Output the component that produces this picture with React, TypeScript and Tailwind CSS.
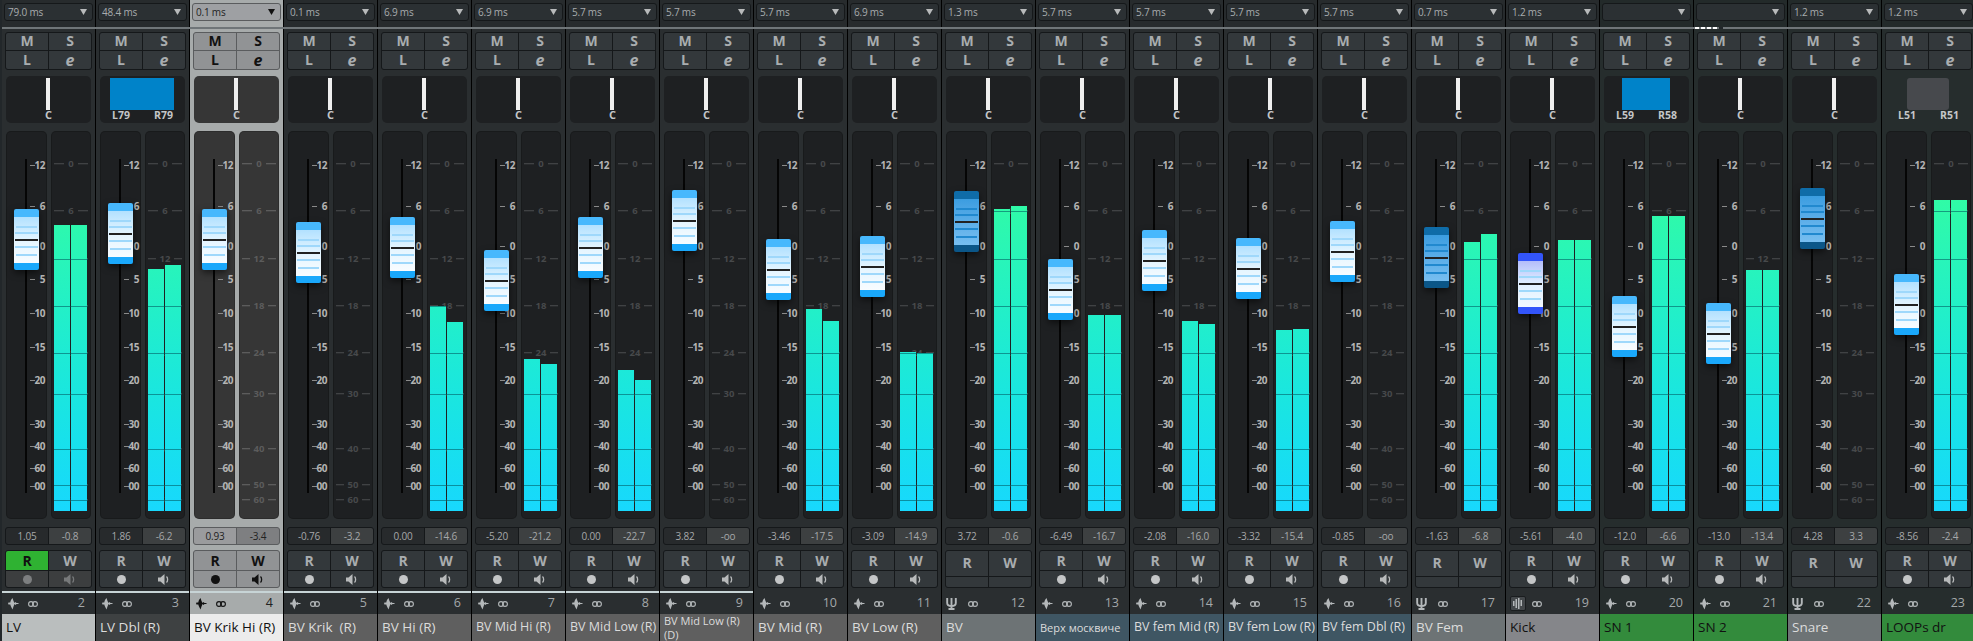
import React from "react";

type Ch = {
  name: string;
  num: number;
  ms: string;
  vol: string;
  peak: string;
  fader: number;
  meter?: [number, number];
  kind?: "dark" | "blue";
  pan?: { x: number; w: number; l: string; r: string };
  nameBg: string;
  nameText: string;
  icon?: "wave" | "group" | "kick";
  noRec?: boolean;
};

const GREY = "bg-[#5f5f5f]";
const SLATE = "bg-[#3f5663]";
const GREEN = "bg-[#338b3c]";
const LT = "text-[#dcdcdc]";
const DK = "text-[#111111]";

const channels: Ch[] = [
  { name: "LV", num: 2, ms: "79.0 ms", vol: "1.05", peak: "-0.8", fader: 209, meter: [225, 225], nameBg: "bg-[#babebe]", nameText: DK },
  { name: "LV Dbl (R)", num: 3, ms: "48.4 ms", vol: "1.86", peak: "-6.2", fader: 203, meter: [269, 265], nameBg: "bg-[#3e4142]", nameText: LT, pan: { x: 10, w: 64, l: "L79", r: "R79" } },
  { name: "BV Krik Hi (R)", num: 4, ms: "0.1 ms", vol: "0.93", peak: "-3.4", fader: 209, nameBg: "bg-[#ececec]", nameText: DK },
  { name: "BV Krik  (R)", num: 5, ms: "0.1 ms", vol: "-0.76", peak: "-3.2", fader: 222, nameBg: GREY, nameText: LT },
  { name: "BV Hi (R)", num: 6, ms: "6.9 ms", vol: "0.00", peak: "-14.6", fader: 217, meter: [306, 322], nameBg: GREY, nameText: LT },
  { name: "BV Mid Hi (R)", num: 7, ms: "6.9 ms", vol: "-5.20", peak: "-21.2", fader: 250, meter: [359, 364], nameBg: GREY, nameText: LT },
  { name: "BV Mid Low (R)", num: 8, ms: "5.7 ms", vol: "0.00", peak: "-22.7", fader: 217, meter: [370, 380], nameBg: GREY, nameText: LT },
  { name: "BV Mid Low (R) (D)", num: 9, ms: "5.7 ms", vol: "3.82", peak: "-oo", fader: 190, nameBg: GREY, nameText: LT },
  { name: "BV Mid (R)", num: 10, ms: "5.7 ms", vol: "-3.46", peak: "-17.5", fader: 239, meter: [309, 321], nameBg: GREY, nameText: LT },
  { name: "BV Low (R)", num: 11, ms: "6.9 ms", vol: "-3.09", peak: "-14.9", fader: 236, meter: [352, 353], nameBg: GREY, nameText: LT },
  { name: "BV", num: 12, ms: "1.3 ms", vol: "3.72", peak: "-0.6", fader: 191, kind: "dark", meter: [209, 206], nameBg: "bg-[#6d7375]", nameText: LT, icon: "group", noRec: true },
  { name: "Верх москвиче", num: 13, ms: "5.7 ms", vol: "-6.49", peak: "-16.7", fader: 259, meter: [315, 315], nameBg: SLATE, nameText: LT },
  { name: "BV fem Mid (R)", num: 14, ms: "5.7 ms", vol: "-2.08", peak: "-16.0", fader: 230, meter: [321, 324], nameBg: SLATE, nameText: LT },
  { name: "BV fem Low (R)", num: 15, ms: "5.7 ms", vol: "-3.32", peak: "-15.4", fader: 238, meter: [330, 329], nameBg: SLATE, nameText: LT },
  { name: "BV fem Dbl (R)", num: 16, ms: "5.7 ms", vol: "-0.85", peak: "-oo", fader: 221, nameBg: SLATE, nameText: LT },
  { name: "BV Fem", num: 17, ms: "0.7 ms", vol: "-1.63", peak: "-6.8", fader: 227, kind: "dark", meter: [242, 234], nameBg: "bg-[#6d7375]", nameText: LT, icon: "group", noRec: true },
  { name: "Kick", num: 19, ms: "1.2 ms", vol: "-5.61", peak: "-4.0", fader: 253, kind: "blue", meter: [240, 240], nameBg: "bg-[#85868a]", nameText: DK, icon: "kick" },
  { name: "SN 1", num: 20, ms: "", vol: "-12.0", peak: "-6.6", fader: 296, meter: [216, 216], nameBg: GREEN, nameText: DK, pan: { x: 18, w: 48, l: "L59", r: "R58" } },
  { name: "SN 2", num: 21, ms: "", vol: "-13.0", peak: "-13.4", fader: 303, meter: [270, 270], nameBg: GREEN, nameText: DK },
  { name: "Snare", num: 22, ms: "1.2 ms", vol: "4.28", peak: "3.3", fader: 188, kind: "dark", nameBg: "bg-[#6d7375]", nameText: LT, icon: "group", noRec: true },
  { name: "LOOPs dr", num: 23, ms: "1.2 ms", vol: "-8.56", peak: "-2.4", fader: 274, meter: [200, 200], nameBg: GREEN, nameText: DK, pan: { x: 21, w: 42, l: "L51", r: "R51" } },
];

const faderScale: [string, number][] = [
  ["12", 165], ["6", 206], ["0", 246], ["5", 279], ["10", 313], ["15", 347],
  ["20", 380], ["30", 424], ["40", 446], ["60", 468], ["00", 486],
];
const meterScale: [string, number][] = [
  ["0", 164], ["6", 211], ["12", 259], ["18", 306], ["24", 353],
  ["30", 394], ["40", 449], ["50", 485], ["60", 500],
];

const PANEL_TOP = 131;
const BAR_BOTTOM = 511;
const SELECTED = 2;

function WaveIcon({ color }: { color: string }) {
  return (
    <svg width="13" height="12" viewBox="0 0 13 12" fill={color}>
      <path d="M0 5.5h2l1-1.5 1 1 1-3 1.5-2 1 3 1 2 1-1 1 1h2v1h-2l-1 1-1-1-1 2.5-1 3-1.5-3-1-2.5-1 1-1-1.5h-2z" />
    </svg>
  );
}

function GroupIcon({ color }: { color: string }) {
  return (
    <svg width="11" height="12" viewBox="0 0 11 12" fill="none" stroke={color} strokeWidth="1.9">
      <path d="M1.2 0v5c0 2 1.8 3 4.3 3s4.3-1 4.3-3V0M5.5 0v11M2.5 11h6" />
    </svg>
  );
}

function KickIcon({ color }: { color: string }) {
  return (
    <div className="flex h-[15px] w-[16px] items-center justify-center rounded-[2px] border border-[#1a1d1f] bg-[#44484b]">
      <svg width="10" height="11" viewBox="0 0 10 11" fill={color}>
        <path d="M0 3h1.5v5H0zM2.5 1H4v9H2.5zM5 0h1.5v11H5zM7.5 2H9v6H7.5z" />
      </svg>
    </div>
  );
}

function LinkIcon({ color }: { color: string }) {
  return (
    <svg width="10" height="6" viewBox="0 0 10 6" fill="none" stroke={color} strokeWidth="1.1">
      <circle cx="3" cy="3" r="2.4" />
      <circle cx="7" cy="3" r="2.4" />
    </svg>
  );
}

function SpeakerIcon({ color }: { color: string }) {
  return (
    <svg width="12" height="11" viewBox="0 0 12 11" fill={color}>
      <path d="M0 3.5h2.5L6.5 0v11L2.5 7.5H0z" />
      <path d="M8.5 2.5c1.5 1.5 1.5 4.5 0 6" fill="none" stroke={color} strokeWidth="1.3" />
    </svg>
  );
}

function Handle({ kind, top }: { kind?: "dark" | "blue"; top: number }) {
  const capTop = kind === "dark" ? "bg-[#0f6ca8]" : kind === "blue" ? "bg-[#3355fa]" : "bg-[#47b8fd]";
  const capBottom = kind === "dark" ? "bg-[#0b5688]" : kind === "blue" ? "bg-[#3355fa]" : "bg-[#1aa8fb]";
  const body =
    kind === "dark"
      ? "bg-gradient-to-b from-[#3b9de0] to-[#77bef0]"
      : kind === "blue"
        ? "bg-gradient-to-b from-[#b4bdfa] via-[#e2f1ff] to-[#f2f9ff]"
        : "bg-gradient-to-b from-[#b2e1ff] via-[#e4f5ff] to-[#f8fcff]";
  const groove = kind === "dark" ? "bg-[#2189cf]" : "bg-[#9fd8fb]";
  return (
    <div
      className="absolute left-[8px] z-10 flex h-[61px] w-[25px] flex-col overflow-hidden rounded-[2px] shadow-[0_3px_7px_rgba(0,0,0,0.55)]"
      style={{ top }}
    >
      <div className={`h-[8px] shrink-0 ${capTop}`} />
      <div className={`relative flex-1 ${body}`}>
        <div className={`absolute inset-x-[2px] top-[9px] h-[2px] ${groove}`} />
        <div className={`absolute inset-x-[1px] top-[15px] h-[2px] ${groove}`} />
        <div className="absolute inset-x-[1px] top-[22px] h-[2px] bg-[#222222]" />
        <div className={`absolute inset-x-[1px] top-[29px] h-[2px] ${groove}`} />
        <div className={`absolute inset-x-[2px] top-[37px] h-[2px] ${groove}`} />
      </div>
      <div className={`h-[7px] shrink-0 ${capBottom}`} />
    </div>
  );
}

function FaderPanel({ ch, selected }: { ch: Ch; selected: boolean }) {
  return (
    <div
      className={`relative h-full w-[41px] rounded-[5px] shadow-[inset_0_0_0_1px_rgba(0,0,0,0.18)] ${selected ? "bg-[#363636]" : "bg-[#1e2022]"}`}
    >
      <div className="absolute left-[19px] top-[28px] h-[334px] w-[2px] bg-[#050505]" />
      {faderScale.map(([label, y]) => (
        <div
          key={label}
          className="absolute left-[24px] flex w-[15px] -translate-y-1/2 items-center justify-between text-[10px] font-bold leading-none tracking-[-0.5px] text-[#b4b4b4]"
          style={{ top: y - PANEL_TOP }}
        >
          <div className="h-px w-[5px] bg-[#8a8a8a]" />
          <span>{label}</span>
        </div>
      ))}
      <Handle kind={ch.kind} top={ch.fader - PANEL_TOP} />
    </div>
  );
}

function MeterPanel({ ch, selected }: { ch: Ch; selected: boolean }) {
  const [l, r] = ch.meter ?? [BAR_BOTTOM, BAR_BOTTOM];
  return (
    <div
      className={`relative h-full w-[40px] rounded-[5px] shadow-[inset_0_0_0_1px_rgba(0,0,0,0.18)] ${selected ? "bg-[#363636]" : "bg-[#1e2022]"}`}
    >
      {meterScale.map(([label, y]) => (
        <div
          key={label}
          className={`absolute left-[3px] flex w-[34px] -translate-y-1/2 items-center gap-[4px] text-[9.5px] font-bold leading-none ${selected ? "text-[#5c5c5c]" : "text-[#47494b]"}`}
          style={{ top: y - PANEL_TOP }}
        >
          <div className={`h-px flex-1 ${selected ? "bg-[#6a6a6a]" : "bg-[#4c4e50]"}`} />
          <span>{label}</span>
          <div className={`h-px flex-1 ${selected ? "bg-[#6a6a6a]" : "bg-[#4c4e50]"}`} />
        </div>
      ))}
      {ch.meter && (
        <div className="absolute bottom-[8px] left-[3px] flex h-[311px] w-[33px] items-end gap-px">
          {[l, r].map((top, i) => (
            <div key={i} className="relative w-[16px] overflow-hidden" style={{ height: BAR_BOTTOM - top }}>
              <div className="absolute bottom-0 left-0 h-[311px] w-[16px] bg-gradient-to-b from-[#30fba6] to-[#18d8fd]" />
            </div>
          ))}
        </div>
      )}
      {ch.meter &&
        meterScale
          .filter(([, y]) => y >= Math.min(l, r))
          .map(([label, y]) => {
            const left = y >= l ? 3 : 20;
            const right = y >= r ? 37 : 19;
            return (
              <div
                key={label}
                className="absolute h-px bg-[rgba(0,80,90,0.55)]"
                style={{ top: y - PANEL_TOP, left, width: right - left }}
              />
            );
          })}
    </div>
  );
}

function Cell({ className, children }: { className: string; children?: React.ReactNode }) {
  return <div className={`flex items-center justify-center ${className}`}>{children}</div>;
}

function nameClass(name: string) {
  if (name.length > 15) return "whitespace-normal text-[11px] leading-[14px]";
  if (name === "Верх москвиче") return "whitespace-nowrap text-[11px] leading-none";
  if (name.includes("fem") || name.includes("Mid Low") || name.includes("Mid Hi")) {
    return "whitespace-pre text-[12.5px] leading-none";
  }
  return "whitespace-pre text-[13.5px] leading-none";
}

function Strip({ ch, index }: { ch: Ch; index: number }) {
  const selected = index === SELECTED;
  const greenish = index >= 17;
  const bg = selected ? "bg-[#a7abab]" : greenish ? "bg-[#262d2d]" : "bg-[#2a2e30]";
  const btn = selected ? "bg-[#919395] text-[#111111]" : "bg-[#33383b] text-[#a9adaf]";
  const frame = selected ? "border-[#5a5c5e] bg-[#5a5c5e]" : "border-[#15181a] bg-[#15181a]";
  const iconColor = selected ? "#111111" : "#b4b8ba";
  return (
    <div className={`flex h-[612px] w-[94px] shrink-0 flex-col border-r border-black ${bg}`}>
      <div className={`ml-[3px] mt-[3px] grid h-[38px] w-[87px] grid-cols-2 gap-px rounded-[3px] border text-[14px] font-bold leading-none ${frame}`}>
        <Cell className={`rounded-tl-[2px] ${btn}`}>M</Cell>
        <Cell className={`rounded-tr-[2px] ${btn}`}>S</Cell>
        <Cell className={`rounded-bl-[2px] ${btn}`}>L</Cell>
        <Cell className={`rounded-br-[2px] text-[16px] italic ${btn}`}>e</Cell>
      </div>

      <div
        className={`relative ml-[4px] mt-[6px] h-[47px] w-[85px] rounded-[5px] ${index === 20 ? "" : selected ? "bg-[#363636]" : "bg-[#1e2022]"}`}
      >
        {ch.pan ? (
          <>
            <div
              className={`absolute top-[2px] h-[32px] ${index === 20 ? "rounded-[3px] bg-[#47494d]" : "bg-[#0083c9]"}`}
              style={{ left: ch.pan.x, width: ch.pan.w }}
            />
            <div className="absolute inset-x-[12px] bottom-[2px] flex justify-between text-[10.5px] font-bold leading-[12px] text-[#c4c6c8]">
              <span>{ch.pan.l}</span>
              <span>{ch.pan.r}</span>
            </div>
          </>
        ) : (
          <>
            <div className="absolute left-[40px] top-[2px] h-[32px] w-[4px] bg-[#efefef]" />
            <div className="absolute inset-x-0 bottom-[2px] text-center text-[11px] font-bold leading-[12px] text-[#c4c6c8]">C</div>
          </>
        )}
      </div>

      <div className="ml-[4px] mt-[8px] flex h-[388px] gap-[4px]">
        <FaderPanel ch={ch} selected={selected} />
        <MeterPanel ch={ch} selected={selected} />
      </div>

      <div className={`ml-[3px] mt-[8px] grid h-[18px] w-[87px] grid-cols-2 gap-px overflow-hidden rounded-[3px] border text-[10px] leading-none tracking-[-0.2px] ${frame}`}>
        <Cell className={selected ? "bg-[#9a9b9d] text-[#222222]" : "bg-[#272a2c] text-[#a6a8aa]"}>{ch.vol}</Cell>
        <Cell className={selected ? "bg-[#7e7f81] text-[#222222]" : "bg-[#3d4041] text-[#a6a8aa]"}>{ch.peak}</Cell>
      </div>

      <div className={`ml-[3px] mt-[5px] grid h-[38px] w-[87px] grid-cols-2 gap-px overflow-hidden rounded-[3px] border text-[14px] font-bold leading-none ${frame}`}>
        <Cell className={index === 0 ? "bg-[#2fb232] text-[#111111]" : btn}>R</Cell>
        <Cell className={btn}>W</Cell>
        <Cell className={index === 0 ? "bg-[#3c3e3f]" : btn}>
          {!ch.noRec && (
            <div className={`h-[9px] w-[9px] rounded-full ${selected ? "bg-[#111111]" : index === 0 ? "bg-[#7d7f80]" : "bg-[#c4c6c7]"}`} />
          )}
        </Cell>
        <Cell className={index === 0 ? "bg-[#3c3e3f]" : btn}>
          {!ch.noRec && <SpeakerIcon color={selected ? "#111111" : index === 0 ? "#77797a" : "#b8babb"} />}
        </Cell>
      </div>

      <div className={`mt-[3px] h-[2px] ${index < 8 ? "bg-[#c7d4d6]" : ""}`} />

      <div className="flex h-[21px] items-center pl-[4px] pr-[10px] text-[#a4a8aa]">
        <div className="flex w-[22px] items-center">
          {ch.icon === "group" ? (
            <GroupIcon color={iconColor} />
          ) : ch.icon === "kick" ? (
            <KickIcon color={iconColor} />
          ) : (
            <WaveIcon color={iconColor} />
          )}
        </div>
        <LinkIcon color={iconColor} />
        <span className={`ml-auto text-[12.5px] leading-none ${selected ? "text-[#222222]" : ""}`}>{ch.num}</span>
      </div>

      <div className={`flex min-h-0 flex-1 items-center overflow-hidden pl-[4px] ${ch.nameBg} ${ch.nameText}`}>
        <span className={nameClass(ch.name)}>{ch.name}</span>
      </div>
    </div>
  );
}

export default function App() {
  return (
    <div className="h-[641px] w-[1973px] overflow-hidden bg-[#22272a] pl-[2px] [font-family:'Open_Sans',sans-serif]">
      <div className="flex h-[27px]">
        {channels.map((ch, i) => (
          <div
            key={ch.num}
            className={`h-[27px] w-[94px] shrink-0 border-r border-black pl-[2px] pt-[3px] ${i === SELECTED ? "bg-[#a7abab]" : i >= 17 ? "bg-[#232a2a]" : "bg-[#272b2d]"}`}
          >
            <div
              className={`flex h-[18px] w-[89px] items-center justify-between rounded-[3px] border pl-[3px] pr-[5px] text-[10px] leading-none tracking-[-0.2px] ${
                i === SELECTED
                  ? "border-[#5a5c5e] bg-[#9ea0a3] text-[#222222]"
                  : "border-[#15181a] bg-[#2b3033] text-[#a8acae]"
              }`}
            >
              <span>{ch.ms}</span>
              <svg width="7" height="6" viewBox="0 0 7 6" fill={i === SELECTED ? "#111111" : "#b8babb"}>
                <path d="M0 0h7L3.5 6z" />
              </svg>
            </div>
          </div>
        ))}
      </div>

      <div className="relative h-[2px] bg-[#6f7578]">
        <div className="absolute left-[1693px] top-0 flex h-[2px] gap-[2px]">
          <div className="w-[4px] bg-white" />
          <div className="w-[4px] bg-white" />
          <div className="w-[4px] bg-white" />
          <div className="w-[4px] bg-white" />
          <div className="w-[4px] bg-[#22272a]" />
        </div>
      </div>

      <div className="flex">
        {channels.map((ch, i) => (
          <Strip key={ch.num} ch={ch} index={i} />
        ))}
      </div>
    </div>
  );
}
